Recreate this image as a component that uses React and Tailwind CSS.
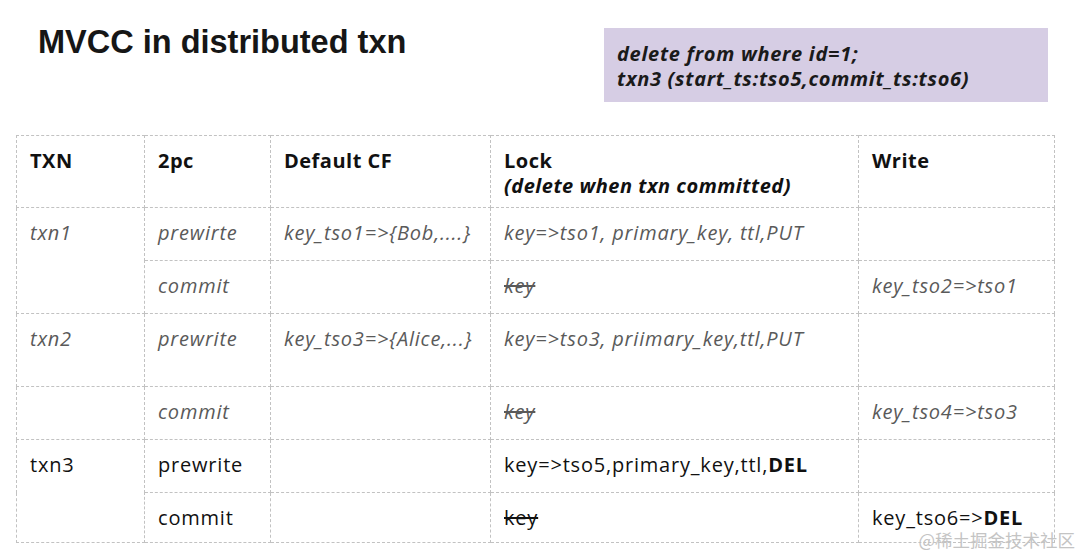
import React from 'react';

const cell = 'border border-dashed border-[#c2c2c2] align-top pl-[13px] pt-[11px] leading-[27px]';
const muted = 'italic text-[#5a5a5a]';

const rows = [
  { h: 'h-[53px]', txn: 'txn1', span: 2, phase: 'prewirte', cf: 'key_tso1=>{Bob,....}', lock: 'key=>tso1, primary_key, ttl,PUT', write: '', soft: true },
  { h: 'h-[53px]', phase: 'commit', cf: '', lock: 'key', strike: true, write: 'key_tso2=>tso1', soft: true },
  { h: 'h-[73px]', txn: 'txn2', span: 1, phase: 'prewrite', cf: 'key_tso3=>{Alice,...}', lock: 'key=>tso3, priimary_key,ttl,PUT', write: '', soft: true },
  { h: 'h-[53px]', txn: '', span: 1, phase: 'commit', cf: '', lock: 'key', strike: true, write: 'key_tso4=>tso3', soft: true },
  { h: 'h-[53px]', txn: 'txn3', span: 2, phase: 'prewrite', cf: '', lock: 'key=>tso5,primary_key,ttl,', lockBold: 'DEL', write: '' },
  { h: 'h-[50px]', phase: 'commit', cf: '', lock: 'key', strike: true, write: 'key_tso6=>', writeBold: 'DEL' },
];

export default function App() {
  return (
    <div
      className="relative w-[1080px] h-[552px] bg-white overflow-hidden text-[#111]"
      style={{ fontFamily: '"Open Sans", "Noto Sans", sans-serif' }}
    >
      <div className="flex h-[135px]">
        <h1
          className="pl-[38px] pt-[23px] text-[32.5px] leading-[38px] font-bold text-[#161616]"
          style={{ fontFamily: '"Liberation Sans", Arial, sans-serif' }}
        >
          MVCC in distributed txn
        </h1>
        <div className="ml-auto mr-[32px] mt-[28px] w-[444px] h-[74px] bg-[#d6cde4] px-[13px] pt-[13px] text-[20px] leading-[25px] tracking-[0.7px] font-bold italic text-[#1a1a1a]">
          <div>delete from where id=1;</div>
          <div>txn3 (start_ts:tso5,commit_ts:tso6)</div>
        </div>
      </div>

      <table className="ml-[16px] table-fixed border-collapse w-[1038px] text-[20px] tracking-[0.8px]">
        <colgroup>
          <col className="w-[128px]" />
          <col className="w-[126px]" />
          <col className="w-[220px]" />
          <col className="w-[368px]" />
          <col className="w-[196px]" />
        </colgroup>
        <thead>
          <tr className="h-[72px] font-bold tracking-[0.5px]">
            <th className={cell + ' text-left !leading-[25px] !pt-[12px]'}>TXN</th>
            <th className={cell + ' text-left !leading-[25px] !pt-[12px]'}>2pc</th>
            <th className={cell + ' text-left !leading-[25px] !pt-[12px]'}>Default CF</th>
            <th className={cell + ' text-left !leading-[25px] !pt-[12px]'}>
              <div>Lock</div>
              <div className="italic">(delete when txn committed)</div>
            </th>
            <th className={cell + ' text-left !leading-[25px] !pt-[12px]'}>Write</th>
          </tr>
        </thead>
        <tbody>
          {rows.map((r, i) => {
            const tone = r.soft ? muted : 'text-[#111]';
            return (
              <tr key={i} className={r.h}>
                {r.txn !== undefined && (
                  <td rowSpan={r.span} className={cell + ' ' + tone}>
                    {r.txn}
                  </td>
                )}
                <td className={cell + ' ' + tone}>{r.phase}</td>
                <td className={cell + ' ' + tone}>{r.cf}</td>
                <td className={cell + ' ' + tone}>
                  <span className={r.strike ? 'line-through' : ''}>{r.lock}</span>
                  {r.lockBold && <b className="font-bold">{r.lockBold}</b>}
                </td>
                <td className={cell + ' ' + tone}>
                  {r.write}
                  {r.writeBold && <b className="font-bold">{r.writeBold}</b>}
                </td>
              </tr>
            );
          })}
        </tbody>
      </table>

      {/* watermark sits over the table's bottom edge */}
      <div
        className="absolute right-[5px] bottom-[3px] text-[17.5px] leading-[18px] text-[#c4c4c4]"
        style={{ fontFamily: '"Noto Sans CJK SC", sans-serif' }}
      >
        @稀土掘金技术社区
      </div>
    </div>
  );
}
